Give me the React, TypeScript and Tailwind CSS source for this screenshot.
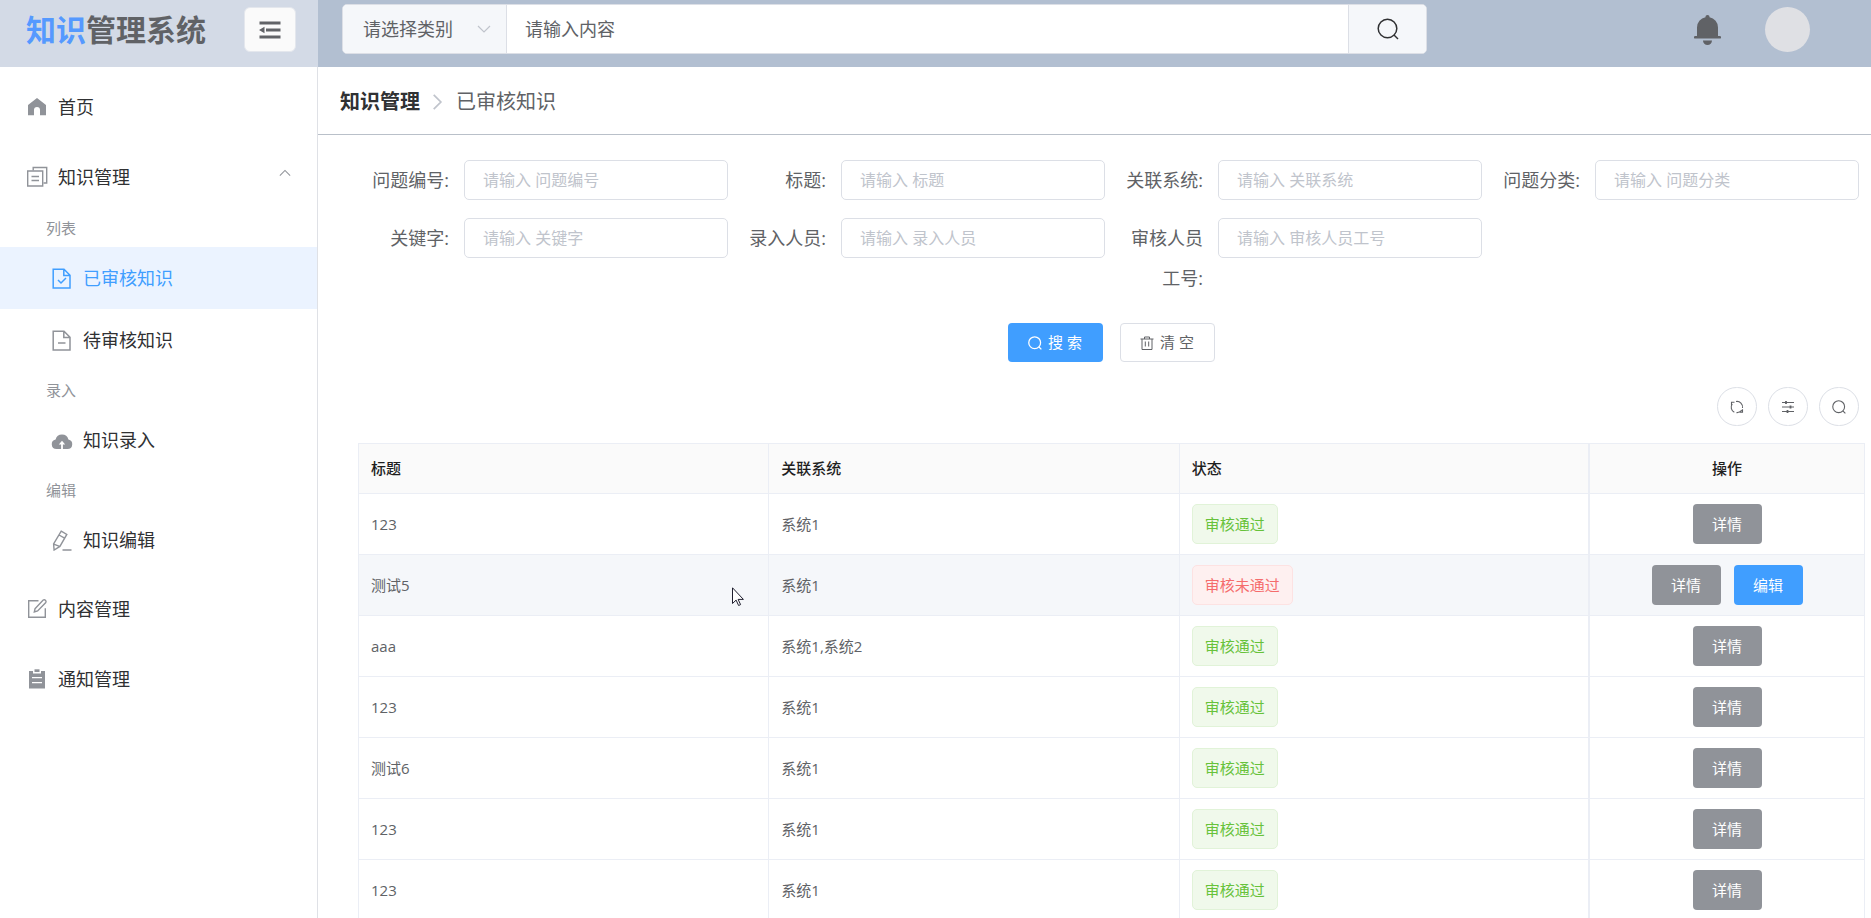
import { useState } from 'react';
import type { ReactNode } from 'react';

interface IconProps {
    className?: string;
}

interface Field {
    id: string;
    label: string;
}

interface KnowledgeRow {
    title: string;
    system: string;
    passed: boolean;
}

const fields: Field[] = [
    { id: 'code', label: '问题编号' },
    { id: 'title', label: '标题' },
    { id: 'system', label: '关联系统' },
    { id: 'category', label: '问题分类' },
    { id: 'keyword', label: '关键字' },
    { id: 'author', label: '录入人员' },
    { id: 'auditor', label: '审核人员工号' },
];

const rows: KnowledgeRow[] = [
    { title: '123', system: '系统1', passed: true },
    { title: '测试5', system: '系统1', passed: false },
    { title: 'aaa', system: '系统1,系统2', passed: true },
    { title: '123', system: '系统1', passed: true },
    { title: '测试6', system: '系统1', passed: true },
    { title: '123', system: '系统1', passed: true },
    { title: '123', system: '系统1', passed: true },
];

/* ---------- icons ---------- */

function HomeIcon({ className }: IconProps) {
    return (
        <svg viewBox="0 0 22 22" fill="currentColor" className={className}>
            <path d="M11 2 20 9v10.2h-6V14a3 3 0 0 0-6 0v5.200H2V9z" />
        </svg>
    );
}

function CopyIcon({ className }: IconProps) {
    return (
        <svg viewBox="0 0 22 22" fill="none" stroke="currentColor" strokeWidth="1.4" className={className}>
            <path d="M7.200 4.500V1.500h13.500v15.500h-3.200" />
            <path d="M1.700 5h15v15h-15zM5.500 10.500h7.500M5.500 14.500h7.500" />
        </svg>
    );
}

function DocIcon({ className, children }: IconProps & { children: ReactNode }) {
    return (
        <svg viewBox="0 0 22 22" fill="none" stroke="currentColor" strokeWidth="1.5" className={className}>
            <path d="M2.200 2.200H13l6 6V21H2.200zM12.800 2.500v6H19" />
            {children}
        </svg>
    );
}

function CloudUploadIcon({ className }: IconProps) {
    return (
        <svg viewBox="0 0 22 22" fill="currentColor" className={className}>
            <path
                fillRule="evenodd"
                d="M5.500 20a4.800 4.800 0 0 1-.9-9.500 6.600 6.600 0 0 1 12.800 0A4.800 4.800 0 0 1 16.500 20h-4.600v-4.500h2.300L11 11.800l-3.200 3.700h2.300V20z"
            />
        </svg>
    );
}

function PencilIcon({ className }: IconProps) {
    return (
        <svg viewBox="0 0 22 22" fill="none" stroke="currentColor" strokeWidth="1.4" className={className}>
            <path d="M10.200 2.200l5.600 3.200-6.900 12-5.800 3.600-.5-6zM8 6l5.600 3.200M2.700 15.200l5.900 2.200M11.500 21h9" />
        </svg>
    );
}

function EditIcon({ className }: IconProps) {
    return (
        <svg viewBox="0 0 22 22" fill="none" stroke="currentColor" strokeWidth="1.400" className={className}>
            <path d="M12.500 2.700H2.700v16.600h16.600v-9" />
            <path d="M9 10.800l8.200-8.800c1.500-1 3.600.8 2.600 2.500L11.600 13l-3.300 1z" />
        </svg>
    );
}

function ClipboardIcon({ className }: IconProps) {
    return (
        <svg viewBox="0 0 22 22" fill="currentColor" className={className}>
            <path fillRule="evenodd" d="M3 3h4v2.500h8V3h4v17.500H3zM6 9v1.300h10V9zM6 14v1.300h10V14z" />
            <path d="M8.500 1.300h5v2.700h-5z" />
        </svg>
    );
}

function FoldIcon({ className }: IconProps) {
    return (
        <svg viewBox="0 0 22 18" fill="currentColor" className={className}>
            <path d="M.5.500h21v3H.5zM7 7.500h14.500v3H7zM.5 14.500h21v3H.5zM0 9l5.500-3.200v6.400z" />
        </svg>
    );
}

function SearchIcon({ className, width = 1.5 }: IconProps & { width?: number }) {
    return (
        <svg viewBox="0 0 22 22" fill="none" stroke="currentColor" strokeWidth={width} className={className}>
            <circle cx="10.500" cy="10.500" r="9.300" />
            <path d="M17 17l4 4" />
        </svg>
    );
}

function BellIcon({ className }: IconProps) {
    return (
        <svg viewBox="0 0 27 30" fill="currentColor" className={className}>
            <path d="M13.500 0a2 2 0 0 1 2 2.200A10.500 10.500 0 0 1 24 12.500V21h1.800a1.300 1.300 0 0 1 0 2.600H1.200a1.300 1.300 0 0 1 0-2.600H3v-8.500A10.500 10.500 0 0 1 11.500 2.200a2 2 0 0 1 2-2.200z" />
            <path d="M9 25.500h9a4.500 4.500 0 0 1-9 0z" />
        </svg>
    );
}

function TrashIcon({ className }: IconProps) {
    return (
        <svg viewBox="0 0 14 14" fill="none" stroke="currentColor" strokeWidth="1" className={className}>
            <path d="M.5 3h13M4.500 3V1h5v2M2 3v10.500h10V3M5.300 5.500v5M8.700 5.500v5" />
        </svg>
    );
}

function RefreshIcon({ className }: IconProps) {
    return (
        <svg viewBox="0 0 14 14" fill="none" stroke="currentColor" strokeWidth="1.100" className={className}>
            <path d="M4.300 12.200A5.600 5.600 0 0 1 2.200 4M6 1.500a5.600 5.600 0 0 1 6.500 6.500M11.800 10A5.600 5.600 0 0 1 6.500 12.600" />
            <path d="M1.500 5.200V2.200h3M12.500 9.200v2.900h-3" />
        </svg>
    );
}

function SlidersIcon({ className }: IconProps) {
    return (
        <svg viewBox="0 0 14 14" fill="none" stroke="currentColor" strokeWidth="1.100" className={className}>
            <path d="M1 2.500h12M1 7h12M1 11.500h12" />
            <path strokeWidth="1.800" d="M5 1v3M9.500 5.500v3M6.500 10v3" />
        </svg>
    );
}

function Chevron({ className, d }: IconProps & { d: string }) {
    return (
        <svg viewBox="0 0 14 14" fill="none" stroke="currentColor" strokeWidth="1.200" className={className}>
            <path d={d} />
        </svg>
    );
}

/* ---------- sidebar ---------- */

function MenuLink({ icon, text }: { icon: ReactNode; text: string }) {
    return (
        <a href="#" className="flex h-16 items-center gap-2.5 pl-[26px] pr-[26px] text-[#303133]">
            <span className="text-[#909399]">{icon}</span>
            {text}
        </a>
    );
}

function SubLink({ icon, text, active = false }: { icon: ReactNode; text: string; active?: boolean }) {
    return (
        <a
            href="#"
            aria-current={active ? 'page' : undefined}
            className={`flex h-[62px] items-center gap-2.5 pl-[51px] ${active ? 'bg-[#ebf3ff] text-[#409eff]' : 'text-[#303133]'}`}
        >
            <span className={active ? 'text-[#409eff]' : 'text-[#909399]'}>{icon}</span>
            {text}
        </a>
    );
}

function GroupTitle({ children }: { children: ReactNode }) {
    return <div className="flex h-[38px] items-center pl-[46px] pt-0.5 text-[15px] text-[#909399]">{children}</div>;
}

function Sidebar() {
    const [open, setOpen] = useState(true);

    return (
        <aside className="flex w-[318px] shrink-0 flex-col">
            <div className="flex h-[67px] shrink-0 items-start justify-between bg-[#d3dae6] pl-[26px] pr-[22px] pt-[7px]">
                <h1 className="text-[30px] font-bold leading-[46px] text-[#606266]">
                    <span className="text-[#5599ff]">知识</span>管理系统
                </h1>
                <button
                    type="button"
                    aria-label="收起菜单"
                    className="flex h-[45px] w-[52px] items-center justify-center rounded-md border border-[#e4e7ed] bg-[#fafafa] text-[#606266]"
                >
                    <FoldIcon className="h-[18px] w-[22px]" />
                </button>
            </div>
            <nav className="flex flex-1 flex-col gap-1.5 border-r border-[#dfe1e6] pt-2 text-lg">
                <MenuLink icon={<HomeIcon className="size-[22px]" />} text="首页" />
                <div>
                    <button
                        type="button"
                        aria-expanded={open}
                        onClick={() => setOpen(!open)}
                        className="flex h-16 w-full items-center gap-2.5 pl-[26px] pr-[26px] text-[#303133]"
                    >
                        <CopyIcon className="size-[22px] text-[#909399]" />
                        知识管理
                        <Chevron className="mb-2 ml-auto size-3 text-[#909399]" d="M1 10l6-6 6 6" />
                    </button>
                    {open && (
                        <div>
                            <GroupTitle>列表</GroupTitle>
                            <SubLink
                                active
                                text="已审核知识"
                                icon={
                                    <DocIcon className="size-[22px]">
                                        <path d="M7 13l3 3 5-5" />
                                    </DocIcon>
                                }
                            />
                            <SubLink
                                text="待审核知识"
                                icon={
                                    <DocIcon className="size-[22px]">
                                        <path d="M7 14h7.500" />
                                    </DocIcon>
                                }
                            />
                            <GroupTitle>录入</GroupTitle>
                            <SubLink icon={<CloudUploadIcon className="size-[22px]" />} text="知识录入" />
                            <GroupTitle>编辑</GroupTitle>
                            <SubLink icon={<PencilIcon className="size-[22px]" />} text="知识编辑" />
                        </div>
                    )}
                </div>
                <MenuLink icon={<EditIcon className="size-[22px]" />} text="内容管理" />
                <MenuLink icon={<ClipboardIcon className="size-[22px]" />} text="通知管理" />
            </nav>
        </aside>
    );
}

/* ---------- top bar ---------- */

function TopBar() {
    return (
        <header className="flex h-[67px] shrink-0 items-start justify-between bg-[#b2bfd1] pl-6 pr-[61px] pt-1">
            <form className="flex h-[50px] w-[1085px] overflow-hidden rounded-[5px] border border-[#dcdfe6] bg-white text-lg text-[#606266]">
                <div className="relative w-[164px] shrink-0 border-r border-[#dcdfe6] bg-[#f5f7fa]">
                    <select aria-label="类别" className="h-full w-full appearance-none bg-transparent pl-5 outline-none">
                        <option>请选择类别</option>
                    </select>
                    <Chevron
                        className="pointer-events-none absolute right-[15px] top-[17px] size-3.5 text-[#c0c4cc]"
                        d="M1 4l6 6 6-6"
                    />
                </div>
                <input
                    type="text"
                    aria-label="搜索内容"
                    placeholder="请输入内容"
                    className="min-w-0 flex-1 px-[18px] outline-none placeholder:text-[#606266]"
                />
                <button
                    type="submit"
                    aria-label="搜索"
                    className="flex w-[78px] items-center justify-center border-l border-[#dcdfe6] bg-[#f5f7fa] text-[#303133]"
                >
                    <SearchIcon className="size-[22px]" />
                </button>
            </form>
            <div className="flex items-center gap-11 pt-[3px]">
                <button type="button" aria-label="通知" className="text-[#606266]">
                    <BellIcon className="h-[30px] w-[27px]" />
                </button>
                <span className="size-[45px] rounded-full bg-[#dfe0e4]" />
            </div>
        </header>
    );
}

/* ---------- content ---------- */

function SearchForm() {
    return (
        <form className="pl-[33px] pr-3 pt-[25px]">
            <div className="grid grid-cols-4 gap-y-[18px]">
                {fields.map((field) => (
                    <div key={field.id} className="flex items-start">
                        <label
                            htmlFor={field.id}
                            className="w-[113px] shrink-0 pl-4 pr-[15px] text-right text-lg leading-10 text-[#606266]"
                        >
                            {`${field.label}:`}
                        </label>
                        <input
                            id={field.id}
                            type="text"
                            placeholder={`请输入 ${field.label}`}
                            className="h-10 min-w-0 flex-1 rounded-[5px] border border-[#dcdfe6] px-[18px] text-base text-[#606266] outline-none placeholder:text-[#c0c4cc]"
                        />
                    </div>
                ))}
            </div>
            <div className="flex justify-center gap-[17px] pl-3 pt-[25px] text-[15px]">
                <button
                    type="submit"
                    className="flex h-[39px] w-[95px] items-center justify-center gap-1.5 rounded bg-[#409eff] text-white"
                >
                    <SearchIcon className="size-3.5" width={2} />
                    搜 索
                </button>
                <button
                    type="reset"
                    className="flex h-[39px] w-[95px] items-center justify-center gap-1.5 rounded border border-[#dcdfe6] bg-white text-[#606266]"
                >
                    <TrashIcon className="size-3.5" />
                    清 空
                </button>
            </div>
        </form>
    );
}

function RoundButton({ label, children }: { label: string; children: ReactNode }) {
    return (
        <button
            type="button"
            aria-label={label}
            className="flex h-[39px] w-10 items-center justify-center rounded-full border border-[#dcdfe6] bg-white text-[#606266]"
        >
            {children}
        </button>
    );
}

function KnowledgeTable() {
    return (
        <table className="w-full table-fixed border-separate border-spacing-0 border-l border-t border-[#ebeef5] text-left text-[15px] text-[#606266]">
            <thead>
                <tr className="h-[50px] bg-[#fafafa] text-[#1f1f1f]">
                    <th className="border-b border-r border-[#ebeef5] px-3 font-medium">标题</th>
                    <th className="border-b border-r border-[#ebeef5] px-3 font-medium">关联系统</th>
                    <th className="border-b border-r-2 border-[#ebeef5] px-3 font-medium">状态</th>
                    <th className="w-[275px] border-b border-r border-[#ebeef5] text-center font-medium">操作</th>
                </tr>
            </thead>
            <tbody>
                {rows.map((row, i) => (
                    <tr key={i} className={`h-[61px] ${row.passed ? '' : 'bg-[#f5f7fa]'}`}>
                        <td className="border-b border-r border-[#ebeef5] px-3">{row.title}</td>
                        <td className="border-b border-r border-[#ebeef5] px-3">{row.system}</td>
                        <td className="border-b border-r-2 border-[#ebeef5] px-3">
                            <span
                                className={`flex h-10 w-fit items-center rounded-[5px] border px-3 ${
                                    row.passed
                                        ? 'border-[#e1f3d8] bg-[#f0f9eb] text-[#67c23a]'
                                        : 'border-[#fde2e2] bg-[#fef0f0] text-[#f56c6c]'
                                }`}
                            >
                                {row.passed ? '审核通过' : '审核未通过'}
                            </span>
                        </td>
                        <td className="border-b border-r border-[#ebeef5]">
                            <div className="flex justify-center gap-[13px] text-white">
                                <button type="button" className="h-10 w-[69px] rounded bg-[#909399]">
                                    详情
                                </button>
                                {!row.passed && (
                                    <button type="button" className="h-10 w-[69px] rounded bg-[#409eff]">
                                        编辑
                                    </button>
                                )}
                            </div>
                        </td>
                    </tr>
                ))}
            </tbody>
        </table>
    );
}

export default function App() {
    return (
        <div className="flex h-screen overflow-hidden bg-white font-['Open_Sans','Noto_Sans_CJK_SC',sans-serif]">
            <Sidebar />
            <div className="flex min-w-0 flex-1 flex-col">
                <TopBar />
                <div className="flex h-[68px] shrink-0 items-center gap-2 border-b border-[#b9c0c9] pl-[22px] pt-0.5 text-xl text-[#606266]">
                    <a href="#" className="font-bold text-[#303133]">
                        知识管理
                    </a>
                    <Chevron className="size-5 text-[#c0c4cc]" d="M4 2l5 5-5 5" />
                    <span>已审核知识</span>
                </div>
                <main>
                    <SearchForm />
                    <div className="flex justify-end gap-[11px] pb-[17px] pr-3 pt-[25px]">
                        <RoundButton label="刷新">
                            <RefreshIcon className="size-3.5" />
                        </RoundButton>
                        <RoundButton label="列设置">
                            <SlidersIcon className="size-3.5" />
                        </RoundButton>
                        <RoundButton label="搜索">
                            <SearchIcon className="size-3.5" width={1.7} />
                        </RoundButton>
                    </div>
                    <div className="pl-10 pr-1.5">
                        <KnowledgeTable />
                    </div>
                </main>
            </div>

            {/* Mouse pointer */}
            <svg viewBox="0 0 12 19" className="pointer-events-none absolute left-[732px] top-[587px] h-[19px] w-3">
                <path
                    d="M.5.800v15.700l3.600-3.400 2.500 5.400 2-.9-2.500-5.200h5.300z"
                    fill="#fff"
                    stroke="#1f1f2e"
                    strokeWidth="1"
                />
            </svg>
        </div>
    );
}
